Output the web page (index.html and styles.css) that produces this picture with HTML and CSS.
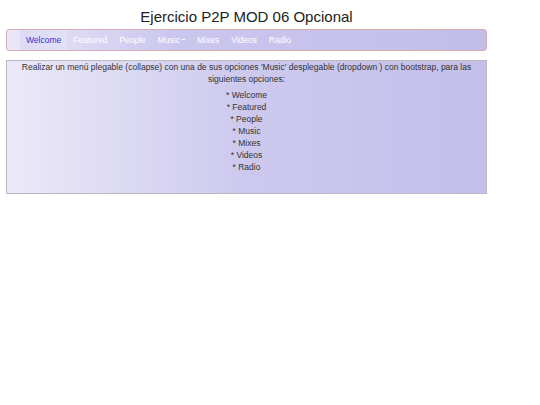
FILE: index.html
```html
<!DOCTYPE html>
<html lang="es">
<head>
<meta charset="utf-8">
<title>Ejercicio P2P MOD 06 Opcional</title>
<link rel="stylesheet" href="styles.css">
</head>
<body>
<div class="container">
  <h1 class="title">Ejercicio P2P MOD 06 Opcional</h1>
  <nav class="navbar">
    <ul class="nav">
      <li class="nav-item active"><a href="#">Welcome</a></li>
      <li class="nav-item"><a href="#">Featured</a></li>
      <li class="nav-item"><a href="#">People</a></li>
      <li class="nav-item"><a href="#">Music<span class="caret"></span></a></li>
      <li class="nav-item"><a href="#">Mixes</a></li>
      <li class="nav-item"><a href="#">Videos</a></li>
      <li class="nav-item"><a href="#">Radio</a></li>
    </ul>
  </nav>
  <div class="panel">
    <p class="intro">Realizar un menú plegable (collapse) con una de sus opciones 'Music' desplegable (dropdown ) con bootstrap, para las siguientes opciones:</p>
    <ul class="options">
      <li>* Welcome</li>
      <li>* Featured</li>
      <li>* People</li>
      <li>* Music</li>
      <li>* Mixes</li>
      <li>* Videos</li>
      <li>* Radio</li>
    </ul>
  </div>
</div>
</body>
</html>
```
FILE: styles.css
```css
html, body {
  margin: 0;
  padding: 0;
  background: #ffffff;
}
body {
  font-family: "Liberation Sans", Arial, sans-serif;
  color: #333333;
}
.container {
  width: 481px;
  margin-left: 6px;
}
.title {
  margin: 0;
  padding-top: 7px;
  height: 22px;
  font-size: 15px;
  font-weight: normal;
  text-align: center;
  color: #222222;
  line-height: 19px;
}
.navbar {
  height: 20px;
  border: 1px solid #d8aab2;
  border-radius: 3px;
  background: linear-gradient(to right, #e9e7f8 0%, #cbc6ee 35%, #c2bee9 100%);
  display: flex;
  align-items: stretch;
  padding-left: 13px;
}
.nav {
  display: flex;
  list-style: none;
  margin: 0;
  padding: 0;
}
.nav-item a {
  display: flex;
  align-items: center;
  height: 100%;
  padding: 0 6px;
  font-size: 8.5px;
  color: #ffffff;
  text-decoration: none;
}
.nav-item.active a {
  background: linear-gradient(to right, #dcdaf5, #e3e1f8);
  color: #3a32c8;
}
.caret {
  display: inline-block;
  width: 3px;
  height: 1px;
  margin-left: 2px;
  border-top: 1px solid #ffffff;
  vertical-align: middle;
}
.panel {
  margin-top: 9px;
  height: 132px;
  border: 1px solid #b9b9c4;
  background: linear-gradient(to right, #ebe9f9 0%, #cdc9ee 50%, #c2bfea 100%);
  text-align: center;
  font-size: 8.5px;
  line-height: 12px;
  color: #333333;
}
.intro {
  margin: 0;
  padding: 0 14px;
}
.options {
  list-style: none;
  margin: 4px 0 0;
  padding: 0;
}
```
